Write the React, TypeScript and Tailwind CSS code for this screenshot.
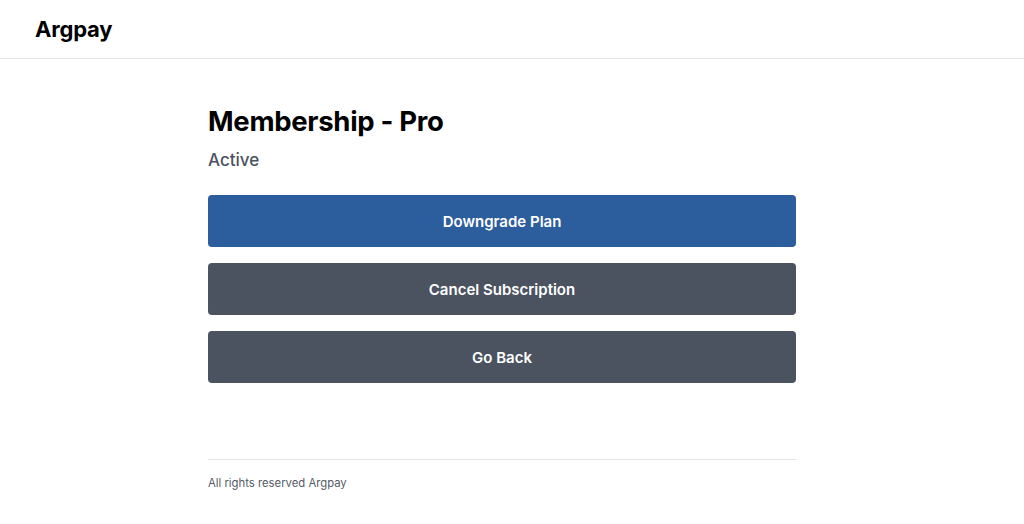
import React from "react";

export default function App() {
  return (
    <div className="min-h-screen bg-white font-['Inter',sans-serif] text-black">
      <header className="h-[59px] border-b border-[#e5e5e5] flex items-center px-[35px]">
        <span className="text-[22px] font-bold tracking-[-0.2px]">Argpay</span>
      </header>
      <main className="w-[588px] ml-[208px] pt-[45px]">
        <h1 className="text-[27.5px] font-bold leading-[34px] tracking-[-0.3px]">Membership - Pro</h1>
        <p className="mt-[10px] text-[17px] font-medium text-[#4b5260] leading-[24px]">Active</p>
        <div className="mt-[23px] flex flex-col gap-[16px]">
          <button className="h-[52px] pt-[2px] rounded-[4px] bg-[#2c5d9c] text-white text-[15px] font-semibold">Downgrade Plan</button>
          <button className="h-[52px] pt-[2px] rounded-[4px] bg-[#4b5260] text-white text-[15px] font-semibold">Cancel Subscription</button>
          <button className="h-[52px] pt-[2px] rounded-[4px] bg-[#4b5260] text-white text-[15px] font-semibold">Go Back</button>
        </div>
        <footer className="mt-[76px] border-t border-[#e5e5e5] pt-[15px]">
          <p className="text-[11.3px] text-[#555b66]">All rights reserved Argpay</p>
        </footer>
      </main>
    </div>
  );
}
